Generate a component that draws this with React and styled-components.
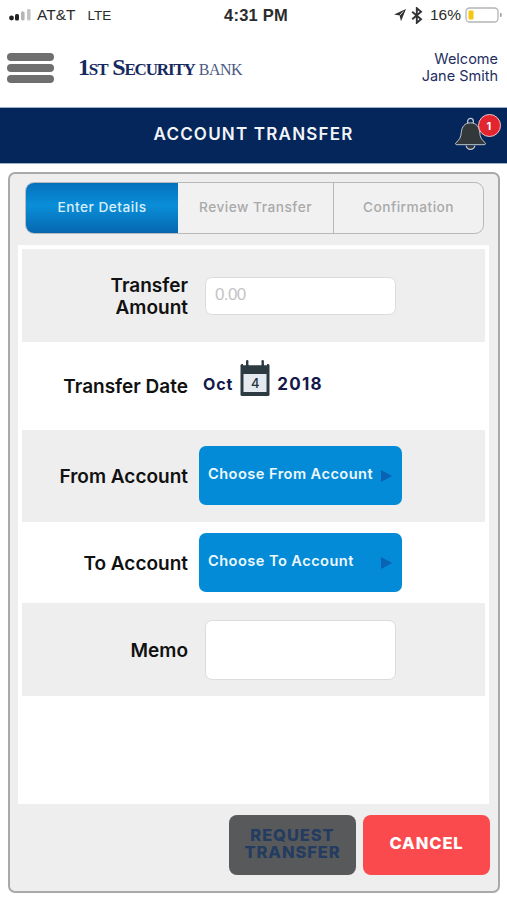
import React from 'react'
import styled, { createGlobalStyle } from 'styled-components'

const NAVY = '#04265a'
const BLUE = '#038bd8'

const GlobalStyle = createGlobalStyle`
  html, body { margin: 0; padding: 0; background: #fff; }
  body { font-family: Inter, "Liberation Sans", sans-serif; }
  * { box-sizing: border-box; }
`

const Page = styled.div`
  width: 507px;
  height: 900px;
  overflow: hidden;
  background: #fff;
`

const StatusBar = styled.div`
  height: 30px;
  padding: 0 4px 0 9px;
  display: grid;
  grid-template-columns: 1fr auto 1fr;
  align-items: center;
  font-family: "Liberation Sans", sans-serif;
  font-size: 15.5px;
  color: #2b2b2b;
`

const StatusLeft = styled.div`
  display: flex;
  align-items: center;
  gap: 2px;
`

const Carrier = styled.span`
  margin-right: 10px;
`

const NetworkType = styled.span`
  font-size: 13.5px;
`

const Clock = styled.div`
  font-weight: 700;
  font-size: 16.5px;
  letter-spacing: 0.2px;
`

const StatusRight = styled.div`
  display: flex;
  align-items: center;
  justify-content: flex-end;
  gap: 4px;
`

const Percent = styled.span`
  margin: 0 0 0 3px;
`

const Header = styled.div`
  height: 77px;
  padding: 0 9px 0 7px;
  display: flex;
  align-items: center;
`

const Burger = styled.div`
  width: 47px;
  display: flex;
  flex-direction: column;
  gap: 3px;
  margin: -2px 24px 0 0;
`

const BurgerBar = styled.span`
  height: 8px;
  border-radius: 4px;
  background: #6f6f6f;
`

const Logo = styled.div`
  display: flex;
  align-items: baseline;
  gap: 4px;
  margin-top: -2px;
  font-family: "Liberation Serif", serif;
  color: #16295f;
  white-space: nowrap;
`

const LogoName = styled.span`
  font-weight: 700;
  font-size: 24px;
  font-variant: small-caps;
  letter-spacing: -1.15px;
`

const LogoBank = styled.span`
  font-size: 16px;
  letter-spacing: -0.5px;
  color: #4d5a85;
`

const Welcome = styled.div`
  margin-left: auto;
  margin-top: -3px;
  text-align: right;
  font-size: 14.5px;
  line-height: 17px;
  color: #1e2f5f;
`

const TitleBar = styled.div`
  position: relative;
  height: 57px;
  padding-bottom: 4px;
  border-top: 1px solid #9db0c9;
  border-bottom: 1px solid #9db0c9;
  background: ${NAVY};
  display: flex;
  align-items: center;
  justify-content: center;
  color: #f2f4f8;
  font-weight: 600;
  font-size: 17px;
  letter-spacing: 1.2px;
`

const BellWrap = styled.div`
  position: absolute;
  left: 454px;
  top: 6px;
  width: 48px;
  height: 40px;
`

const Badge = styled.span`
  position: absolute;
  left: 24px;
  top: 0;
  width: 23px;
  height: 23px;
  border-radius: 50%;
  background: #e2252f;
  border: 1px solid #f3c5c8;
  color: #fff;
  font-size: 11px;
  font-weight: 700;
  display: flex;
  align-items: center;
  justify-content: center;
`

const Panel = styled.div`
  margin: 8px 7px 0 8px;
  height: 721px;
  border: 2px solid #a9a9a9;
  border-radius: 7px;
  background: #eeeeee;
  padding: 8px 9px 0 8px;
  display: flex;
  flex-direction: column;
`

const Tabs = styled.div`
  margin: 0 5px 0 7px;
  height: 52px;
  display: grid;
  grid-template-columns: 152px 155px 1fr;
  border: 1px solid #b9b9b9;
  border-radius: 9px;
  overflow: hidden;
  background: #f1f1f1;
`

const Tab = styled.div`
  display: flex;
  align-items: center;
  justify-content: center;
  padding-bottom: 2px;
  font-size: 13.7px;
  font-weight: 500;
  letter-spacing: 0.5px;
  color: ${(p) => (p.$active ? '#d9eefb' : '#a9a9a9')};
  background: ${(p) => (p.$active ? 'linear-gradient(#0571bd, #0a8ed8 45%, #0567b0)' : 'transparent')};
  border-left: ${(p) => (p.$divider ? '1px solid #b9b9b9' : 'none')};
`

const Sheet = styled.div`
  margin-top: 11px;
  height: 559px;
  background: #fff;
  padding: 4px 4px 0;
  display: flex;
  flex-direction: column;
`

const Row = styled.div`
  height: ${(p) => p.$h}px;
  background: ${(p) => (p.$shaded ? '#eeeeee' : '#fff')};
  display: flex;
  align-items: center;
`

const Label = styled.div`
  width: 166px;
  padding-top: 2px;
  text-align: right;
  font-size: 19px;
  font-weight: 600;
  line-height: 22px;
  color: #111;
`

const Field = styled.div`
  margin-left: 17px;
  width: 191px;
  height: ${(p) => p.$h}px;
  background: #fff;
  border: 1px solid #dcdcdc;
  border-radius: 7px;
  padding: 0 0 2px 9px;
  display: flex;
  align-items: center;
  font-family: "Liberation Sans", sans-serif;
  font-size: 17px;
  letter-spacing: -0.6px;
  color: #c4c4c4;
`

const DateValue = styled.div`
  margin: -4px 0 0 15px;
  display: flex;
  align-items: center;
  gap: 8px;
  font-size: 16px;
  font-weight: 700;
  letter-spacing: 0.9px;
  color: #15184a;
`

const Year = styled.span`
  font-size: 17px;
  letter-spacing: 1.2px;
`

const CalendarWrap = styled.div`
  position: relative;
  width: 30px;
  height: 38px;
  margin: -12px -1px 0 -1px;
`

const CalendarDay = styled.span`
  position: absolute;
  left: 0;
  right: 0;
  top: 16px;
  text-align: center;
  font-size: 13px;
  font-weight: 500;
  letter-spacing: 0;
  color: #26323a;
`

const ChooseButton = styled.div`
  margin: ${(p) => (p.$raised ? '-2px' : '0')} 0 0 11px;
  width: 203px;
  height: 59px;
  padding: 0 10px 3px 9px;
  border-radius: 7px;
  background: ${BLUE};
  color: #eef8fe;
  font-size: 14.6px;
  font-weight: 600;
  letter-spacing: 0.45px;
  display: flex;
  align-items: center;
  justify-content: space-between;
`

const Arrow = styled.span`
  width: 0;
  height: 0;
  margin-top: 4px;
  border-left: 11px solid #0a62b4;
  border-top: 6.5px solid transparent;
  border-bottom: 6.5px solid transparent;
`

const Footer = styled.div`
  margin: 11px -1px 0 0;
  display: flex;
  justify-content: flex-end;
  gap: 7px;
`

const ActionButton = styled.div`
  width: 127px;
  height: 60px;
  padding-bottom: 3px;
  border-radius: 8px;
  background: ${(p) => (p.$cancel ? '#fb4a4d' : '#58595b')};
  color: ${(p) => (p.$cancel ? '#fff' : '#243c60')};
  font-size: 16.5px;
  font-weight: 800;
  line-height: 17px;
  letter-spacing: 0.9px;
  text-align: center;
  display: flex;
  align-items: center;
  justify-content: center;
`

const Signal = () => (
  <svg width="26" height="12" viewBox="0 0 26 12">
    <circle cx="2.5" cy="9" r="2.4" fill="#222" />
    <rect x="6" y="5" width="4" height="6.5" rx="1.5" fill="#222" />
    <rect x="12" y="2.5" width="3.6" height="9" rx="1.4" fill="#b5b5b5" />
    <rect x="18" y="0" width="3.6" height="11.5" rx="1.4" fill="#c4c4c4" />
  </svg>
)

const LocationArrow = () => (
  <svg width="14" height="14" viewBox="0 0 14 14">
    <path d="M13 1 1 6.6l5.6.9L8 13.2z" fill="#333" />
    <path d="M10.2 3.6 6.6 7.5" stroke="#fff" strokeWidth="0.8" />
  </svg>
)

const Bluetooth = () => (
  <svg width="12" height="17" viewBox="0 0 12 17" fill="none" stroke="#333" strokeWidth="1.9">
    <path d="M1.2 4.8 10 12.2 5.8 15.8V1.2L10 4.8 1.2 12.2" />
  </svg>
)

const Battery = () => (
  <svg width="38" height="16" viewBox="0 0 38 16">
    <rect x="1" y="1" width="32" height="14" rx="3.5" fill="#fff" stroke="#b4b4b4" strokeWidth="1.3" />
    <rect x="3.5" y="3.5" width="5" height="9" rx="1" fill="#f7c613" />
    <rect x="35" y="6" width="1.6" height="4" rx="0.8" fill="#9a9a9a" />
  </svg>
)

const Bell = () => (
  <svg width="33" height="35" viewBox="0 0 34 36" style={{ position: 'absolute', left: 0, top: 3 }}>
    <circle cx="17" cy="4.5" r="3" fill="none" stroke="#c5ccd4" strokeWidth="1.3" />
    <path
      d="M17 6c6 0 9 4 9.500 10 .4 5 2 7.500 5.500 10.500 1 1 .5 2-1 2H3c-1.500 0-2-1-1-2 3.500-3 5.100-5.500 5.500-10.500C8 10 11 6 17 6z"
      fill="#33383b"
      stroke="#c5ccd4"
      strokeWidth="1"
    />
    <path d="M12.500 29.500c.5 2.600 2.300 3.800 4.500 3.800s4-1.200 4.500-3.800" fill="#33383b" stroke="#c5ccd4" strokeWidth="1.200" />
  </svg>
)

const Calendar = () => (
  <svg width="30" height="38" viewBox="0 0 30 38">
    <rect x="0.500" y="5" width="29" height="32" rx="1.500" fill="#2c3a42" />
    <rect x="3.500" y="15" width="23" height="18" fill="#e4ebf0" />
    <rect x="6" y="1" width="2.400" height="8" rx="1.200" fill="#2c3a42" />
    <rect x="21.500" y="1" width="2.400" height="8" rx="1.200" fill="#2c3a42" />
    <path d="M3 5.500h3M8.500 5.500h13M24 5.500h3" stroke="#fff" strokeWidth="1.600" />
  </svg>
)

export default function App() {
  return (
    <Page>
      <GlobalStyle />
      <StatusBar>
        <StatusLeft>
          <Signal />
          <Carrier>AT&amp;T</Carrier>
          <NetworkType>LTE</NetworkType>
        </StatusLeft>
        <Clock>4:31 PM</Clock>
        <StatusRight>
          <LocationArrow />
          <Bluetooth />
          <Percent>16%</Percent>
          <Battery />
        </StatusRight>
      </StatusBar>

      <Header>
        <Burger>
          <BurgerBar />
          <BurgerBar />
          <BurgerBar />
        </Burger>
        <Logo>
          <LogoName>1st Security</LogoName>
          <LogoBank>BANK</LogoBank>
        </Logo>
        <Welcome>
          Welcome
          <br />
          Jane Smith
        </Welcome>
      </Header>

      <TitleBar>
        ACCOUNT TRANSFER
        <BellWrap>
          <Bell />
          <Badge>1</Badge>
        </BellWrap>
      </TitleBar>

      <Panel>
        <Tabs>
          <Tab $active>Enter Details</Tab>
          <Tab>Review Transfer</Tab>
          <Tab $divider>Confirmation</Tab>
        </Tabs>

        <Sheet>
          <Row $shaded $h={93}>
            <Label>
              Transfer
              <br />
              Amount
            </Label>
            <Field $h={38}>0.00</Field>
          </Row>
          <Row $h={88}>
            <Label>Transfer Date</Label>
            <DateValue>
              Oct
              <CalendarWrap>
                <Calendar />
                <CalendarDay>4</CalendarDay>
              </CalendarWrap>
              <Year>2018</Year>
            </DateValue>
          </Row>
          <Row $shaded $h={92}>
            <Label>From Account</Label>
            <ChooseButton $raised>
              Choose From Account
              <Arrow />
            </ChooseButton>
          </Row>
          <Row $h={81}>
            <Label>To Account</Label>
            <ChooseButton>
              Choose To Account
              <Arrow />
            </ChooseButton>
          </Row>
          <Row $shaded $h={93}>
            <Label>Memo</Label>
            <Field $h={60} />
          </Row>
        </Sheet>

        <Footer>
          <ActionButton>
            REQUEST
            <br />
            TRANSFER
          </ActionButton>
          <ActionButton $cancel>CANCEL</ActionButton>
        </Footer>
      </Panel>
    </Page>
  )
}
